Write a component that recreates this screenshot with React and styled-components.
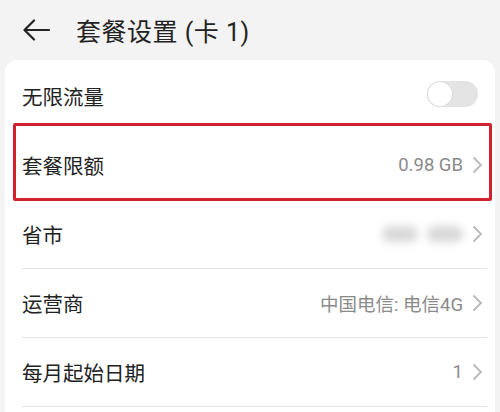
import React from 'react';
import styled, { createGlobalStyle } from 'styled-components';

const GlobalStyle = createGlobalStyle`
    body {
        margin: 0;
        background: #f3f3f3;
        font-family: Roboto, "Noto Sans CJK SC", sans-serif;
    }
`;

const Page = styled.div`
    width: 500px;
    height: 412px;
    overflow: hidden;
    background: #f3f3f3;
`;

const Header = styled.div`
    height: 60px;
    display: flex;
    align-items: center;
    padding-left: 22px;
    gap: 26px;
    .title {
        font-size: 25px;
        color: #222;
        letter-spacing: 0.5px;
    }
`;

const Card = styled.div`
    margin: 0 5px;
    background: #fff;
    border-radius: 12px 12px 0 0;
    padding: 2px 8px 0 17px;
    height: 360px;
`;

const Row = styled.div`
    position: relative;
    height: 68px;
    display: flex;
    align-items: center;
    justify-content: space-between;
    border-bottom: 1px solid ${props => props.divider ? '#e4e4e4' : 'transparent'};
    .label {
        font-size: 20.5px;
        color: #222;
    }
`;

const Value = styled.div`
    display: flex;
    align-items: center;
    gap: 9px;
    font-size: 18.5px;
    color: #8a8a8a;
    padding-right: 4px;
`;

const Blur = styled.span`
    display: inline-block;
    width: ${props => props.w}px;
    height: 16px;
    background: #d8d8d8;
    border-radius: 8px;
    filter: blur(4px);
`;

const Switch = styled.div`
    position: relative;
    width: 51px;
    height: 26px;
    border-radius: 13px;
    background: #e4e4e4;
    margin-right: 9px;
    margin-top: -4px;
    .knob {
        position: absolute;
        left: 1px;
        top: 1px;
        width: 24px;
        height: 24px;
        border-radius: 50%;
        background: #fff;
        box-shadow: 0 0 0 1px #dcdcdc;
    }
`;

const Highlight = styled.div`
    position: absolute;
    left: -9px;
    right: -5px;
    top: -8px;
    bottom: -2px;
    border: 3px solid #d2222f;
    border-radius: 2px;
    pointer-events: none;
`;

const Chevron = () => (
    <svg width="11" height="18" viewBox="0 0 11 18">
        <path d="M1.5 1.5 L9 9 L1.5 16.5" fill="none" stroke="#b8b8b8" strokeWidth="1.8" />
    </svg>
);

const BackArrow = () => (
    <svg width="28" height="22" viewBox="0 0 28 22">
        <path d="M27 11 H3 M12 1.5 L2.5 11 L12 20.5" fill="none" stroke="#222" strokeWidth="2.2" strokeLinecap="round" strokeLinejoin="round" />
    </svg>
);

const rows = [
    { label: '套餐限额', value: '0.98 GB', mark: true },
    { label: '省市', blur: true },
    { label: '运营商', value: '中国电信: 电信4G' },
    { label: '每月起始日期', value: '1' },
];

function App() {
    return (
        <Page>
            <GlobalStyle />
            <Header>
                <BackArrow />
                <span className="title">套餐设置 (卡 1)</span>
            </Header>
            <Card>
                <Row>
                    <span className="label">无限流量</span>
                    <Switch><div className="knob"></div></Switch>
                </Row>
                {rows.map(item => (
                    <Row key={item.label} divider={!item.mark}>
                        <span className="label">{item.label}</span>
                        <Value>
                            {item.blur ? (
                                <>
                                    <Blur w={36} />
                                    <Blur w={36} />
                                </>
                            ) : item.value}
                            <Chevron />
                        </Value>
                        {item.mark && <Highlight />}
                    </Row>
                ))}
            </Card>
        </Page>
    );
}

export default App;
